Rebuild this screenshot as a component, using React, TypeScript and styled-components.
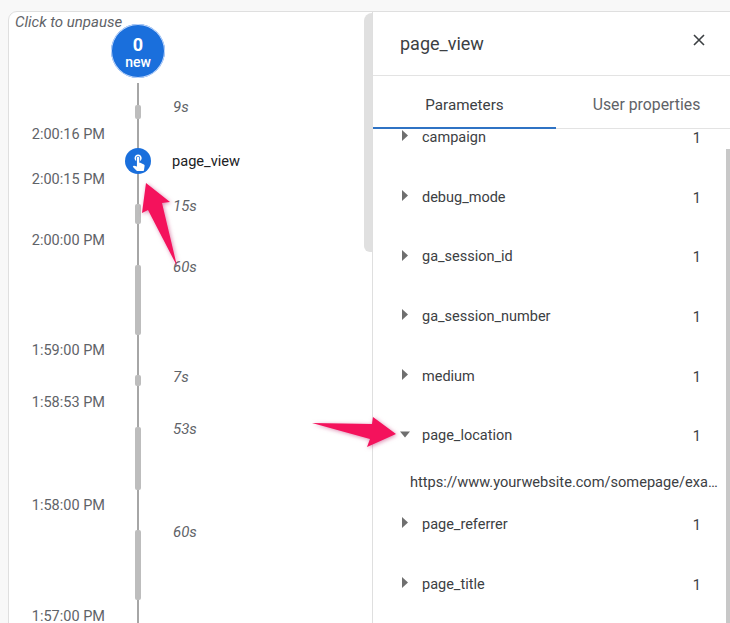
import styled, { createGlobalStyle } from "styled-components";

const GlobalStyle = createGlobalStyle`
  html, body {
    margin: 0;
    padding: 0;
    height: 623px;
    overflow: hidden;
    background: #f8f8f8;
    font-family: Roboto, "Liberation Sans", sans-serif;
    color: #3c4043;
  }
`;

const Page = styled.div`
  position: relative;
  width: 730px;
  height: 623px;
  padding: 11px 0 0 8px;
  box-sizing: border-box;
  overflow: hidden;
`;

const Card = styled.div`
  display: flex;
  width: 731px;
  height: 640px;
  background: #fff;
  border: 1px solid #dfdfdf;
  border-radius: 9px 0 0 0;
  box-sizing: border-box;
  overflow: hidden;
`;

const LeftPane = styled.div`
  display: flex;
  width: 363px;
  flex: none;
`;

const Timeline = styled.div`
  width: 355px;
  flex: none;
`;

const PaneThumb = styled.div`
  width: 8px;
  height: 239px;
  margin-top: 1px;
  background: #e0e0e0;
  border-radius: 8px 0 0 6px;
  flex: none;
`;

const Unpause = styled.div`
  height: 9px;
  padding: 3px 0 0 6px;
  font-size: 15px;
  line-height: 14px;
  font-style: italic;
  color: #5f6368;
  white-space: nowrap;
`;

const BubbleRow = styled.div`
  height: 59px;
  padding-left: 102px;
`;

const Bubble = styled.div`
  position: relative;
  width: 54px;
  height: 54px;
  padding-top: 2px;
  box-sizing: border-box;
  border-radius: 50%;
  background: #1a6fdc;
  box-shadow: 0 0 0 1px #c6dafc inset;
  color: #fff;
  display: flex;
  flex-direction: column;
  align-items: center;
  justify-content: center;
  text-align: center;
`;

const BubbleCount = styled.span`
  font-size: 18px;
  line-height: 20px;
  font-weight: 700;
`;

const BubbleLabel = styled.span`
  font-size: 14px;
  line-height: 15px;
  font-weight: 500;
`;

const Row = styled.div<{ $height: number }>`
  display: grid;
  grid-template-columns: 96px 66px 1fr;
  height: ${(p) => p.$height}px;
`;

const Axis = styled.div`
  position: relative;
  display: flex;
  justify-content: center;
  background: linear-gradient(#a6a6a6, #a6a6a6) center / 2px 100% no-repeat;
`;

const GapBar = styled.div<{ $height: number }>`
  width: 6px;
  height: ${(p) => p.$height}px;
  margin-top: 22px;
  background: #bdbdbd;
  border-radius: 2px;
`;

const Duration = styled.div`
  padding: 16px 0 0 2px;
  font-size: 15px;
  line-height: 16px;
  font-style: italic;
  color: #5f6368;
`;

const TimeText = styled.div`
  padding-top: 2px;
  font-size: 14.5px;
  line-height: 8px;
  color: #5f6368;
  text-align: right;
  white-space: nowrap;
`;

const EventIcon = styled.div`
  width: 26px;
  height: 26px;
  margin-top: 11px;
  border-radius: 50%;
  background: #1a6fdc;
  display: flex;
  align-items: center;
  justify-content: center;
  color: #fff;
`;

const EventName = styled.div`
  padding: 16px 0 0 1px;
  font-size: 14.6px;
  line-height: 16px;
  color: #202124;
`;

const DetailPane = styled.div`
  flex: 1;
  min-width: 0;
  border-left: 1px solid #dfdfdf;
  display: flex;
  flex-direction: column;
`;

const DetailHeader = styled.div`
  display: flex;
  align-items: center;
  justify-content: space-between;
  height: 64px;
  flex: none;
  padding: 0 32px 0 27px;
  border-bottom: 1px solid #e3e3e3;
  box-sizing: border-box;
  font-size: 18px;
  color: #3c4043;
`;

const CloseIcon = styled.svg`
  width: 14px;
  height: 14px;
  margin-top: -8px;
  color: #3c4043;
`;

const Tabs = styled.div`
  display: flex;
  height: 53px;
  flex: none;
  border-bottom: 1px solid #e3e3e3;
  box-sizing: border-box;
`;

const Tab = styled.div<{ $active?: boolean }>`
  width: 183px;
  flex: none;
  box-sizing: border-box;
  padding: 20px ${(p) => (p.$active ? 0 : 2)}px 0 0;
  font-size: ${(p) => (p.$active ? 15.2 : 15.8)}px;
  line-height: 18px;
  text-align: center;
  color: ${(p) => (p.$active ? "#3c4043" : "#5f6368")};
  border-bottom: 2px solid ${(p) => (p.$active ? "#2f73c4" : "transparent")};
  margin-bottom: -1px;
`;

const ListArea = styled.div`
  display: flex;
  flex: 1;
  min-height: 0;
`;

const List = styled.div`
  width: 353px;
  flex: none;
  padding-top: 0.9px;
`;

const ListThumb = styled.div`
  width: 4px;
  flex: none;
  margin-top: 20px;
  background: #c8c8c8;
`;

const Param = styled.div<{ $height?: number }>`
  height: ${(p) => p.$height ?? 59.7}px;
`;

const ParamHead = styled.div`
  display: flex;
  align-items: center;
  height: 16px;
  padding: 0 25px 0 27px;
  font-size: 14.5px;
  line-height: 16px;
  color: #3c4043;
`;

const Caret = styled.svg`
  width: 10px;
  height: 11px;
  margin-top: -4px;
  margin-right: 12px;
  flex: none;
  fill: #6f6f6f;
`;

const ParamName = styled.span`
  flex: 1;
`;

const ParamCount = styled.span`
  margin-top: 2px;
`;

const ParamValue = styled.div`
  margin: 30px 0 0 37px;
  font-size: 14.6px;
  line-height: 16px;
  color: #3c4043;
  white-space: nowrap;
`;

const Annotations = styled.svg`
  position: absolute;
  left: 0;
  top: 0;
  width: 730px;
  height: 623px;
  pointer-events: none;
  fill: #f4125c;
  filter: drop-shadow(1px 1px 2px rgba(190, 40, 110, 0.55));
`;

const gaps = [
  { duration: "9s", bar: 14, height: 46, time: "2:00:16 PM" },
  { duration: "15s", bar: 20, height: 53, time: "2:00:00 PM" },
  { duration: "60s", bar: 70, height: 102, time: "1:59:00 PM" },
  { duration: "7s", bar: 11, height: 44, time: "1:58:53 PM" },
  { duration: "53s", bar: 63, height: 95, time: "1:58:00 PM" },
  { duration: "60s", bar: 70, height: 103, time: "1:57:00 PM" },
];

const params = [
  "campaign",
  "debug_mode",
  "ga_session_id",
  "ga_session_number",
  "medium",
  "page_location",
  "page_referrer",
  "page_title",
];

function Gap({ gap }: { gap: (typeof gaps)[number] }) {
  return (
    <>
      <Row $height={gap.height}>
        <div />
        <Axis>
          <GapBar $height={gap.bar} />
        </Axis>
        <Duration>{gap.duration}</Duration>
      </Row>
      <Row $height={8}>
        <TimeText>{gap.time}</TimeText>
        <Axis />
        <div />
      </Row>
    </>
  );
}

export default function App() {
  return (
    <Page>
      <GlobalStyle />
      <Card>
        <LeftPane>
          <Timeline>
            <Unpause>Click to unpause</Unpause>
            <BubbleRow>
              <Bubble>
                <BubbleCount>0</BubbleCount>
                <BubbleLabel>new</BubbleLabel>
              </Bubble>
            </BubbleRow>
            <Gap gap={gaps[0]} />
            <Row $height={37}>
              <div />
              <Axis>
                <EventIcon>
                  <svg width="19" height="19" viewBox="0 0 24 24" fill="currentColor">
                    <path d="M9 11.24V7.5C9 6.12 10.12 5 11.5 5S14 6.12 14 7.5v3.74c1.21-.81 2-2.18 2-3.74C16 5.01 13.99 3 11.5 3S7 5.01 7 7.5c0 1.56.79 2.93 2 3.74zm9.84 4.63l-4.54-2.26c-.17-.07-.35-.11-.54-.11H13v-6c0-.83-.67-1.5-1.5-1.5S10 6.67 10 7.5v10.74l-3.43-.72c-.08-.01-.15-.03-.24-.03-.31 0-.59.13-.79.33l-.79.8 4.94 4.94c.27.27.65.44 1.06.44h6.79c.75 0 1.33-.55 1.44-1.28l.75-5.27c.01-.07.02-.14.02-.2 0-.62-.38-1.16-.91-1.38z" />
                  </svg>
                </EventIcon>
              </Axis>
              <EventName>page_view</EventName>
            </Row>
            <Row $height={8}>
              <TimeText>2:00:15 PM</TimeText>
              <Axis />
              <div />
            </Row>
            {gaps.slice(1).map((gap, i) => (
              <Gap key={i} gap={gap} />
            ))}
            <Row $height={10}>
              <div />
              <Axis />
              <div />
            </Row>
          </Timeline>
          <PaneThumb />
        </LeftPane>
        <DetailPane>
          <DetailHeader>
            <span>page_view</span>
            <CloseIcon viewBox="0 0 14 14" fill="none" stroke="currentColor" strokeWidth="1.6">
              <path d="M2 2l10 10M12 2L2 12" />
            </CloseIcon>
          </DetailHeader>
          <Tabs>
            <Tab $active>Parameters</Tab>
            <Tab>User properties</Tab>
          </Tabs>
          <ListArea>
            <List>
              {params.map((name) => {
                const open = name === "page_location";
                return (
                  <Param key={name} $height={open ? 88.6 : undefined}>
                    <ParamHead>
                      <Caret viewBox="0 0 10 11">
                        <path d={open ? "M0 2.5h10l-5 6z" : "M2 0v11l6-5.5z"} />
                      </Caret>
                      <ParamName>{name}</ParamName>
                      <ParamCount>1</ParamCount>
                    </ParamHead>
                    {open && (
                      <ParamValue>https://www.yourwebsite.com/somepage/exa…</ParamValue>
                    )}
                  </Param>
                );
              })}
            </List>
            <ListThumb />
          </ListArea>
        </DetailPane>
      </Card>
      <Annotations viewBox="0 0 730 623">
        <polygon points="146,183 170,202 162,203 177,266 148,210 142,213" />
        <polygon points="312,423 372,424 373,417 396,434 367,447 370,439" />
      </Annotations>
    </Page>
  );
}
